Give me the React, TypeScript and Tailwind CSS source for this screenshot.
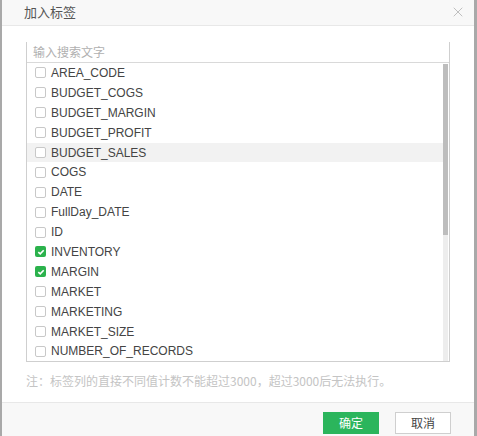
import { X } from "lucide-react"

const fields = [
  { name: "AREA_CODE", checked: false },
  { name: "BUDGET_COGS", checked: false },
  { name: "BUDGET_MARGIN", checked: false },
  { name: "BUDGET_PROFIT", checked: false },
  { name: "BUDGET_SALES", checked: false, hover: true },
  { name: "COGS", checked: false },
  { name: "DATE", checked: false },
  { name: "FullDay_DATE", checked: false },
  { name: "ID", checked: false },
  { name: "INVENTORY", checked: true },
  { name: "MARGIN", checked: true },
  { name: "MARKET", checked: false },
  { name: "MARKETING", checked: false },
  { name: "MARKET_SIZE", checked: false },
  { name: "NUMBER_OF_RECORDS", checked: false },
]

function Checkbox({ checked }: { checked: boolean }) {
  if (checked) {
    return (
      <span className="flex h-[11px] w-[11px] items-center justify-center rounded-[2px] bg-[#2bb24c]">
        <svg width="8" height="8" viewBox="0 0 8 8">
          <path d="M1.3 4.1 L3.2 5.9 L6.7 2.2" fill="none" stroke="#fff" strokeWidth="1.6" />
        </svg>
      </span>
    )
  }
  return <span className="h-[11px] w-[11px] rounded-[2px] border border-[#c8c8c8] bg-white" />
}

export default function App() {
  return (
    <div
      className="flex h-[436px] w-[477px] bg-[#a9a9a9]"
      style={{ fontFamily: '"Liberation Sans", Arial, "Noto Sans CJK SC", sans-serif' }}
    >
      <div className="ml-[2px] flex w-[472px] flex-col bg-white">
        {/* Header */}
        <div className="flex h-[26px] items-center justify-between border-b border-[#e8e8e8] bg-[#f8f8f8] pb-[2px] pl-[22px] pr-[8px]">
          <span className="text-[13px] text-[#555]" style={{ fontFamily: '"Noto Sans CJK SC", sans-serif' }}>
            加入标签
          </span>
          <X size={16} strokeWidth={1.1} className="text-[#aaa]" />
        </div>

        {/* Body */}
        <div className="flex flex-1 flex-col px-[24px] pt-[16px]">
          <div className="flex h-[320px] w-[424px] flex-col border-x border-b border-[#cfcfcf]">
            <div className="flex h-[21px] items-center border-b border-[#d9d9d9] pl-[6px]">
              <span className="text-[12px] text-[#b0b0b0]" style={{ fontFamily: '"Noto Sans CJK SC", sans-serif' }}>
                输入搜索文字
              </span>
            </div>
            <div className="flex min-h-0 flex-1">
              <div className="flex flex-1 flex-col overflow-hidden">
                {fields.map((f) => (
                  <div
                    key={f.name}
                    className={`flex h-[19.9px] shrink-0 items-center gap-[5px] pl-[8px] ${f.hover ? "bg-[#f2f2f2]" : ""}`}
                  >
                    <Checkbox checked={f.checked} />
                    <span className="text-[12px] text-[#444]">{f.name}</span>
                  </div>
                ))}
              </div>
              <div className="mr-[1px] mt-[1px] w-[5px] bg-[#ededed]">
                <div className="h-[171px] w-full bg-[#bdbdbd]" />
              </div>
            </div>
          </div>
          <div
            className="mt-[10px] text-[12px] text-[#c4c4c4]"
            style={{ fontFamily: '"Noto Sans CJK SC", sans-serif' }}
          >
            注：标签列的直接不同值计数不能超过3000，超过3000后无法执行。
          </div>
        </div>

        {/* Footer */}
        <div className="flex h-[34px] items-start justify-end gap-[16px] border-t border-[#e8e8e8] bg-[#f8f8f8] pr-[23px] pt-[9px]">
          <button
            className="flex h-[22px] w-[56px] items-center justify-center bg-[#2bb55c] text-[12px] text-white"
            style={{ fontFamily: '"Noto Sans CJK SC", sans-serif' }}
          >
            确定
          </button>
          <button
            className="flex h-[22px] w-[56px] items-center justify-center border border-[#cfcfcf] bg-white text-[12px] text-[#444]"
            style={{ fontFamily: '"Noto Sans CJK SC", sans-serif' }}
          >
            取消
          </button>
        </div>
      </div>
    </div>
  )
}
